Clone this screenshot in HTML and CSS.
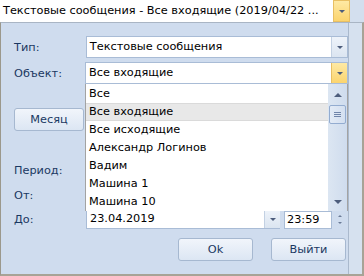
FILE: index.html
```html
<!DOCTYPE html>
<html lang="ru">
<head>
    <meta charset="UTF-8">
    <title>Фильтр сообщений</title>
    <link rel="stylesheet" href="styles.css">
</head>
<body>
    <div class="top-combo">
        <div class="top-text">Текстовые сообщения - Все входящие (2019/04/22 ...</div>
        <div class="drop-btn hot"><span class="arrow"></span></div>
    </div>

    <div class="popup">
        <div class="panel">
            <div class="row first">
                <label class="lbl">Тип:</label>
                <div class="combo">
                    <div class="combo-text">Текстовые сообщения</div>
                    <div class="drop-btn"><span class="arrow"></span></div>
                </div>
            </div>
            <div class="row">
                <label class="lbl">Объект:</label>
                <div class="combo-wrap">
                    <div class="combo">
                        <div class="combo-text">Все входящие</div>
                        <div class="drop-btn hot"><span class="arrow"></span></div>
                    </div>
                    <!-- open list -->
                    <div class="dropdown">
                        <ul class="items">
                            <li>Все</li>
                            <li class="sel">Все входящие</li>
                            <li>Все исходящие</li>
                            <li>Александр Логинов</li>
                            <li>Вадим</li>
                            <li>Машина 1</li>
                            <li>Машина 10</li>
                        </ul>
                        <div class="scroll">
                            <span class="sc-up"></span>
                            <span class="sc-thumb"><i></i><i></i><i></i></span>
                            <span class="sc-down"></span>
                        </div>
                    </div>
                </div>
            </div>

            <div class="row month-row">
                <button class="btn month">Месяц</button>
            </div>

            <!-- these two rows sit under the open list -->
            <div class="row period-row">
                <label class="lbl">Период:</label>
                <div class="combo">
                    <div class="combo-text"></div>
                    <div class="drop-btn"><span class="arrow"></span></div>
                </div>
            </div>
            <div class="row">
                <label class="lbl">От:</label>
                <div class="date-row">
                    <div class="combo date">
                        <div class="combo-text"></div>
                        <div class="drop-btn"><span class="arrow"></span></div>
                    </div>
                    <div class="time"></div>
                    <div class="spin"><span class="sp-up"></span><span class="sp-down"></span></div>
                </div>
            </div>
            <div class="row">
                <label class="lbl">До:</label>
                <div class="date-row">
                    <div class="combo date">
                        <div class="combo-text">23.04.2019</div>
                        <div class="drop-btn"><span class="arrow"></span></div>
                    </div>
                    <div class="time">23:59</div>
                    <div class="spin"><span class="sp-up"></span><span class="sp-down"></span></div>
                </div>
            </div>

            <div class="actions">
                <button class="btn">Ok</button>
                <button class="btn">Выйти</button>
            </div>
        </div>
        <div class="side"></div>
    </div>
</body>
</html>
```

FILE: styles.css
```css
body { margin: 0; width: 364px; height: 276px; overflow: hidden; background: #d3dfee; font-family: "DejaVu Sans", sans-serif; font-size: 11.3px; color: #000; }

.top-combo { display: flex; width: 350px; height: 22px; background: #fff; }
.top-text { flex: 1; padding-left: 3px; line-height: 21px; white-space: nowrap; overflow: hidden; }

.drop-btn { width: 15px; display: flex; align-items: center; justify-content: center; background: linear-gradient(#eef3fa, #dbe5f1); border-left: 1px solid #c3d1e3; }
.drop-btn.hot { background: linear-gradient(#fee9a4, #fbd46e); border: 1px solid #e8bf63; }
.arrow { width: 0; height: 0; border-left: 3px solid transparent; border-right: 3px solid transparent; border-top: 3px solid #4d5d7c; }

.popup { display: flex; height: 254px; box-sizing: border-box; border-left: 1px solid #9b988c; border-right: 2px solid #a7a396; border-bottom: 2px solid #a7a396; border-top: 1px solid #a9b5c4; }
.panel { position: relative; width: 348px; box-sizing: border-box; padding: 13px 0 0 13px; background: #cfdcee; border-right: 1px solid #aab9cd; display: flex; flex-direction: column; }
.side { flex: 1; background: #d6e1ef; }

.row { display: flex; align-items: center; margin-bottom: 5px; }
.row.first { margin-bottom: 4px; }
.lbl { width: 72px; color: #1a3862; }
.combo-wrap { position: relative; width: 263px; }
.combo { display: flex; width: 263px; height: 22px; box-sizing: border-box; background: #fff; border: 1px solid #a9bcd6; }
.combo .drop-btn { border-top: 0; border-bottom: 0; border-right: 0; }
.combo-text { flex: 1; padding-left: 3px; line-height: 20px; white-space: nowrap; overflow: hidden; }

.month-row { margin-top: 19px; margin-bottom: 0; }
.btn { font-family: "DejaVu Sans", sans-serif; font-size: 11.3px; color: #1a3862; background: linear-gradient(#f1f5fb, #dce6f3); border: 1px solid #a6b8d0; border-radius: 3px; height: 23px; padding: 0; }
.month { width: 70px; }
.period-row { margin-top: 28px; }

.date-row { display: flex; align-items: center; }
.combo.date { width: 194px; height: 19px; border-top: 0; border-right: 0; }
.combo.date .drop-btn { border-left: 1px solid #c3d1e3; }
.combo.date .combo-text { line-height: 18px; }
.time { width: 48px; height: 18px; margin-left: 4px; box-sizing: border-box; background: #fff; border: 1px solid #a9bcd6; line-height: 16px; padding-left: 2px; }
.spin { width: 14px; height: 18px; margin-left: 1px; display: flex; flex-direction: column; align-items: center; justify-content: center; gap: 5px; }
.sp-up { border-left: 2px solid transparent; border-right: 2px solid transparent; border-bottom: 2px solid #6a7a96; }
.sp-down { border-left: 2px solid transparent; border-right: 2px solid transparent; border-top: 2px solid #6a7a96; }

.actions { display: flex; justify-content: flex-end; gap: 18px; margin-top: 4px; padding-right: 2px; }
.actions .btn { width: 75px; }

/* open list of the object combo */
.dropdown { position: absolute; top: 100%; left: 0; width: 263px; height: 127px; box-sizing: border-box; display: flex; background: #fff; border-left: 1px solid #a3a3a3; border-right: 1px solid #a3a3a3; z-index: 5; }
.items { list-style: none; margin: 0; padding: 1px 0 0; flex: 1; }
.items li { height: 18px; line-height: 18px; padding-left: 3px; white-space: nowrap; box-sizing: border-box; }
.items li.sel { background: #e8e8e8; border-top: 1px solid #dadada; border-bottom: 1px solid #dadada; line-height: 16px; }
.scroll { width: 19px; position: relative; background: linear-gradient(90deg, #dce6f2, #cfdcee); display: flex; flex-direction: column; align-items: center; }
.sc-up { margin-top: 9px; border-left: 4px solid transparent; border-right: 4px solid transparent; border-bottom: 4px solid #4d5d7c; }
.sc-thumb { margin-top: 8px; width: 17px; height: 19px; box-sizing: border-box; border: 1px solid #93acd0; border-radius: 2px; background: linear-gradient(90deg, #e3ebf6, #d3dff0); display: flex; flex-direction: column; align-items: center; justify-content: center; gap: 1px; }
.sc-thumb i { width: 7px; height: 1px; background: #7085aa; }
.sc-down { margin-top: auto; margin-bottom: 7px; border-left: 4px solid transparent; border-right: 4px solid transparent; border-top: 4px solid #4d5d7c; }
```
